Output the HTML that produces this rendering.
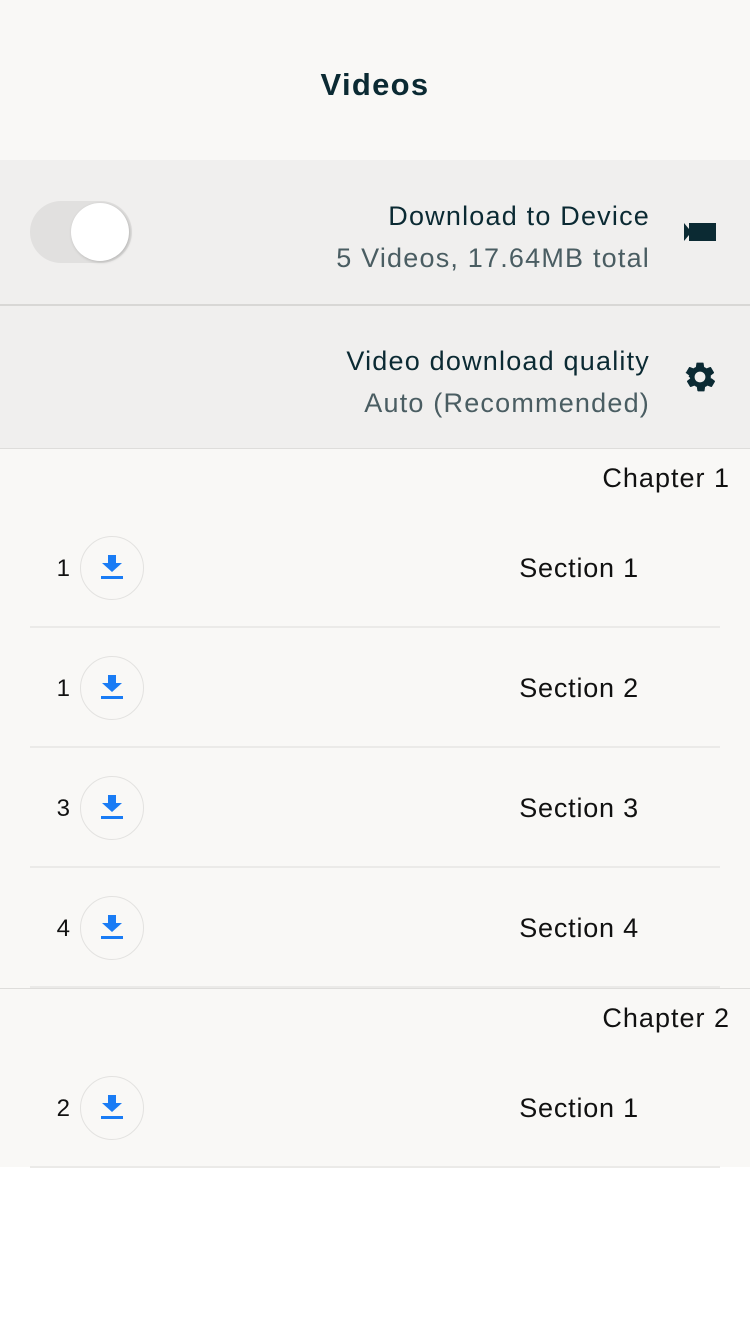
<!DOCTYPE html>
<html><head><style>
body{margin:0;width:750px;height:1334px;background:#fff;font-family:"Liberation Sans",sans-serif;color:#0b2a33;position:relative;overflow:hidden}
.a{position:absolute}
.hdr{left:0;top:0;width:750px;height:160px;background:#f9f8f6}
.t{left:0;width:750px;top:67px;text-align:center;font-weight:bold;font-size:31px;letter-spacing:1.3px}
.box{left:0;width:750px;background:#f0efee}
.r{right:100px;text-align:right;white-space:nowrap;letter-spacing:1.2px}
.num{width:40px;text-align:right;left:30px;font-size:24px;color:#111}
.circ{left:80px;width:64px;height:64px;border:1.5px solid #e3e2e0;border-radius:50%;box-sizing:border-box}
.sec{right:111px;font-size:27px;color:#111;letter-spacing:0.8px}
.sep{left:30px;width:690px;height:2px;background:#ebeae8}
.ch{right:20px;font-size:27px;color:#111;letter-spacing:1px}
</style></head><body>
<div class="a hdr"></div>
<div class="a t">Videos</div>
<div class="a box" style="top:160px;height:144px"></div>
<div class="a" style="top:304px;left:0;width:750px;height:2px;background:#d8d7d5"></div>
<div class="a box" style="top:306px;height:142px"></div>
<div class="a" style="top:448px;left:0;width:750px;height:1px;background:#dedddb"></div>
<div class="a" style="top:449px;left:0;width:750px;height:718px;background:#f9f8f6"></div>
<div class="a" style="left:30px;top:201px;width:102px;height:62px;border-radius:31px;background:#e1e0df"></div>
<div class="a" style="left:71px;top:203px;width:58px;height:58px;border-radius:50%;background:#fff;box-shadow:1px 1px 3px rgba(0,0,0,.2)"></div>
<div class="a r" style="top:201px;font-size:27px">Download to Device</div>
<div class="a r" style="top:243px;font-size:27px;color:#4a5d62">5 Videos, 17.64MB total</div>
<svg class="a" style="left:684px;top:221px" width="32" height="22" viewBox="0 0 32 22"><path d="M0 2 L5 8 L5 14 L0 20Z M5 2H32V20H5Z" fill="#0b2a33"/></svg>
<div class="a r" style="top:346px;font-size:27px">Video download quality</div>
<div class="a r" style="top:388px;font-size:27px;color:#4a5d62">Auto (Recommended)</div>
<svg class="a" style="left:682px;top:359px" width="36" height="36" viewBox="0 0 24 24"><path fill="#0b2a33" d="M19.14 12.94c.04-.3.06-.61.06-.94s-.02-.64-.07-.94l2.03-1.58a.49.49 0 0 0 .12-.61l-1.920-3.32a.49.49 0 0 0-.59-.22l-2.39.96c-.5-.38-1.030-.7-1.62-.94l-.36-2.54a.48.48 0 0 0-.48-.41h-3.84c-.24 0-.43.17-.47.41l-.36 2.54c-.59.24-1.13.57-1.62.94l-2.39-.96a.49.49 0 0 0-.59.22L2.74 8.87c-.12.21-.8.47.12.61l2.03 1.58c-.5.3-.7.63-.07.94s.2.64.7.94l-2.03 1.58a.49.49 0 0 0-.12.61l1.92 3.32c.12.22.37.29.59.22l2.39-.96c.5.38 1.03.7 1.62.94l.36 2.54c.5.24.24.41.48.41h3.84c.24 0 .44-.17.47-.41l.36-2.54c.59-.24 1.13-.56 1.62-.94l2.39.96c.22.08.47 0 .59-.22l1.92-3.32c.12-.22.07-.47-.12-.61l-2.01-1.58zM12 15.6A3.6 3.6 0 1 1 12 8.4a3.6 3.6 0 0 1 0 7.2z"/></svg>
<div class="a ch" style="top:463px">Chapter 1</div>
<div class="a num" style="top:555px">1</div><div class="a circ" style="top:536px"></div><div class="a sec" style="top:553px">Section 1</div><div class="a sep" style="top:626px"></div>
<div class="a num" style="top:675px">1</div><div class="a circ" style="top:656px"></div><div class="a sec" style="top:673px">Section 2</div><div class="a sep" style="top:746px"></div>
<div class="a num" style="top:795px">3</div><div class="a circ" style="top:776px"></div><div class="a sec" style="top:793px">Section 3</div><div class="a sep" style="top:866px"></div>
<div class="a num" style="top:915px">4</div><div class="a circ" style="top:896px"></div><div class="a sec" style="top:913px">Section 4</div><div class="a sep" style="top:986px"></div>
<div class="a" style="top:988px;left:0;width:750px;height:1px;background:#dedddb"></div>
<div class="a ch" style="top:1003px">Chapter 2</div>
<div class="a num" style="top:1095px">2</div><div class="a circ" style="top:1076px"></div><div class="a sec" style="top:1093px">Section 1</div><div class="a sep" style="top:1166px"></div>
<svg width="0" height="0" style="position:absolute"><defs><g id="dl"><path d="M7 0h8v8h6L11 17 1 8h6z" fill="#1a7cf5"/><rect x="0" y="21" width="22" height="3" fill="#1a7cf5"/></g></defs></svg>
<svg class="a" style="left:101px;top:555px" width="22" height="24"><use href="#dl"/></svg>
<svg class="a" style="left:101px;top:675px" width="22" height="24"><use href="#dl"/></svg>
<svg class="a" style="left:101px;top:795px" width="22" height="24"><use href="#dl"/></svg>
<svg class="a" style="left:101px;top:915px" width="22" height="24"><use href="#dl"/></svg>
<svg class="a" style="left:101px;top:1095px" width="22" height="24"><use href="#dl"/></svg>
</body></html>
